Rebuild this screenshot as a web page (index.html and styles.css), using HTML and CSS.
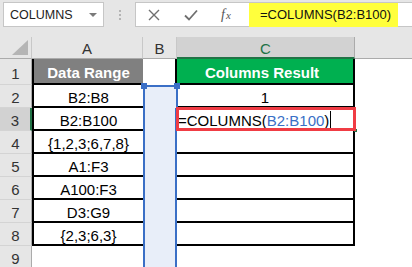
FILE: index.html
```html
<!DOCTYPE html>
<html lang="en">
	<head>
		<meta charset="UTF-8" />
		<meta name="viewport" content="width=device-width, initial-scale=1.0" />
		<title>COLUMNS</title>
		<link rel="stylesheet" href="styles.css">
	</head>
	<body>
		<div class="toolbar">
			<div class="namebox">
				<span>COLUMNS</span>
				<span class="caret"></span>
			</div>
			<div class="grip"><i></i><i></i><i></i></div>
			<div class="formula">
				<span class="btn">
					<svg width="12" height="12" viewBox="0 0 12 12"><path d="M1 1L11 11M11 1L1 11" stroke="#6f6f6f" stroke-width="1.4" fill="none"/></svg>
				</span>
				<span class="btn">
					<svg width="14" height="12" viewBox="0 0 14 12"><path d="M1 6.5L5 10.5L13 1.5" stroke="#6f6f6f" stroke-width="1.8" fill="none"/></svg>
				</span>
				<span class="btn fx"><i>f</i><i>x</i></span>
				<span class="input">=COLUMNS(B2:B100)</span>
			</div>
		</div>

		<div class="sheet">
			<div class="corner"></div>
			<div class="colhead">A</div>
			<div class="colhead">B</div>
			<div class="colhead active">C</div>
			<div class="colhead rest"></div>

			<div class="rowhead">1</div>
			<div class="cell a title">Data Range</div>
			<div class="cell b first"></div>
			<div class="cell c title green">Columns Result</div>
			<div class="cell rest"></div>

			<div class="rowhead">2</div>
			<div class="cell a">B2:B8</div>
			<div class="cell b sel top"></div>
			<div class="cell c">1</div>
			<div class="cell rest"></div>

			<div class="rowhead active">3</div>
			<div class="cell a">B2:B100</div>
			<div class="cell b sel"></div>
			<div class="cell c editing">=COLUMNS(<span class="ref">B2:B100</span>)<span class="cursor"></span></div>
			<div class="cell rest"></div>

			<div class="rowhead">4</div>
			<div class="cell a">{1,2,3;6,7,8}</div>
			<div class="cell b sel"></div>
			<div class="cell c"></div>
			<div class="cell rest"></div>

			<div class="rowhead">5</div>
			<div class="cell a">A1:F3</div>
			<div class="cell b sel"></div>
			<div class="cell c"></div>
			<div class="cell rest"></div>

			<div class="rowhead">6</div>
			<div class="cell a">A100:F3</div>
			<div class="cell b sel"></div>
			<div class="cell c"></div>
			<div class="cell rest"></div>

			<div class="rowhead">7</div>
			<div class="cell a">D3:G9</div>
			<div class="cell b sel"></div>
			<div class="cell c"></div>
			<div class="cell rest"></div>

			<div class="rowhead">8</div>
			<div class="cell a">{2,3;6,3}</div>
			<div class="cell b sel"></div>
			<div class="cell c"></div>
			<div class="cell rest"></div>

			<div class="rowhead">9</div>
			<div class="cell"></div>
			<div class="cell b sel"></div>
			<div class="cell"></div>
			<div class="cell rest"></div>
		</div>
	</body>
</html>
```

FILE: styles.css
```css
* {
	margin: 0;
	padding: 0;
	box-sizing: border-box;
}

body {
	width: 412px;
	height: 267px;
	overflow: hidden;
	background-color: #fff;
	font-family: "Liberation Sans", Arial, sans-serif;
	color: #000;
}

.toolbar {
	height: 38px;
	background-color: #e6e6e6;
	display: flex;
	align-items: flex-start;
	padding-top: 2px;
	border-bottom: 1px solid #d0d0d0;
}

.namebox {
	margin-left: 3px;
	width: 101px;
	height: 25px;
	background-color: #fff;
	border: 1px solid #c6c6c6;
	display: flex;
	align-items: center;
	justify-content: space-between;
	padding: 0 6px 0 6px;
	font-size: 12.5px;
	color: #222;
}

.namebox .caret {
	width: 0;
	height: 0;
	border-left: 4px solid transparent;
	border-right: 4px solid transparent;
	border-top: 4px solid #7a7a7a;
}

.grip {
	width: 31px;
	height: 25px;
	display: flex;
	flex-direction: column;
	align-items: center;
	justify-content: center;
	gap: 2px;
}

.grip i {
	width: 2px;
	height: 2px;
	background-color: #b4b4b4;
}

.formula {
	flex: 1;
	height: 25px;
	background-color: #fff;
	border: 1px solid #c6c6c6;
	border-right: none;
	display: flex;
	align-items: center;
	padding-left: 12px;
}

.formula .btn {
	width: 36px;
	display: flex;
	align-items: center;
}

.formula .fx {
	width: 28px;
	margin-left: 1px;
	font-family: "Liberation Serif", serif;
	font-style: italic;
	color: #555;
	font-size: 14px;
}

.formula .fx i:last-child {
	font-size: 11px;
	margin-left: 1px;
}

.formula .input {
	height: 24px;
	width: 149px;
	background-color: #ffff3c;
	font-size: 13px;
	color: #111;
	display: flex;
	align-items: center;
	padding-left: 11px;
}

.sheet {
	display: grid;
	grid-template-columns: 32px 111px 34px 178px 1fr;
	grid-template-rows: 22px 26px repeat(8, 23px);
	margin-top: -1px;
}

.corner {
	background-color: #e6e6e6;
	border-right: 1px solid #c8c8c8;
	border-bottom: 1px solid #ababab;
	position: relative;
}

.corner::after {
	content: "";
	position: absolute;
	right: 3px;
	bottom: 3px;
	width: 0;
	height: 0;
	border-left: 16px solid transparent;
	border-bottom: 15px solid #b5b5b5;
}

.colhead {
	background-color: #e6e6e6;
	border-right: 1px solid #c8c8c8;
	border-bottom: 1px solid #ababab;
	font-size: 15px;
	color: #333;
	display: flex;
	align-items: center;
	justify-content: center;
	padding-top: 2px;
}

.colhead.active {
	background-color: #d2d2d2;
	color: #217346;
	border-bottom: 2px solid #217346;
	border-right-color: #ababab;
}

.colhead.rest {
	border-right: none;
}

.rowhead {
	background-color: #e6e6e6;
	border-right: 1px solid #ababab;
	border-bottom: 1px solid #d4d4d4;
	font-size: 15px;
	color: #333;
	display: flex;
	align-items: center;
	justify-content: center;
	padding-top: 3px;
}

.rowhead.active {
	background-color: #d2d2d2;
	border-right: 2px solid #217346;
}

.cell {
	font-size: 15px;
	display: flex;
	align-items: center;
	padding-top: 3px;
	white-space: nowrap;
}

.cell.a {
	justify-content: center;
	border-left: 2px solid #000;
	border-bottom: 2px solid #000;
}

.cell.c {
	justify-content: center;
	border-right: 2px solid #000;
	border-bottom: 2px solid #000;
}

.cell.title {
	font-weight: bold;
	color: #fff;
	background-color: #808080;
}

.cell.green {
	background-color: #00b050;
	padding-right: 6px;
}

.cell.b.first {
	border-right: 2px solid #000;
}

.cell.sel {
	background-color: #e8eef9;
	border-left: 2px solid #3a6fc6;
	border-right: 2px solid #3a6fc6;
	position: relative;
}

.cell.sel.top {
	border-top: 2px solid #3a6fc6;
	margin-right: -1px;
}

.cell.sel.top::before,
.cell.sel.top::after {
	content: "";
	position: absolute;
	top: -4px;
	width: 6px;
	height: 6px;
	background-color: #3a6fc6;
}

.cell.sel.top::before {
	left: -4px;
}

.cell.sel.top::after {
	right: -4px;
}

.cell.editing {
	justify-content: flex-start;
	padding-left: 1px;
	position: relative;
}

.cell.editing::after {
	content: "";
	position: absolute;
	left: -1px;
	right: -3px;
	top: -1px;
	bottom: -2px;
	border: 3px solid #f03c44;
}

.cell.editing::before {
	content: "";
	position: absolute;
	right: -4px;
	bottom: -3px;
	width: 3px;
	height: 3px;
	background-color: #217346;
}

.ref {
	color: #3a6fc6;
}

.cursor {
	width: 1px;
	height: 18px;
	background-color: #000;
	margin-left: 1px;
}
```
